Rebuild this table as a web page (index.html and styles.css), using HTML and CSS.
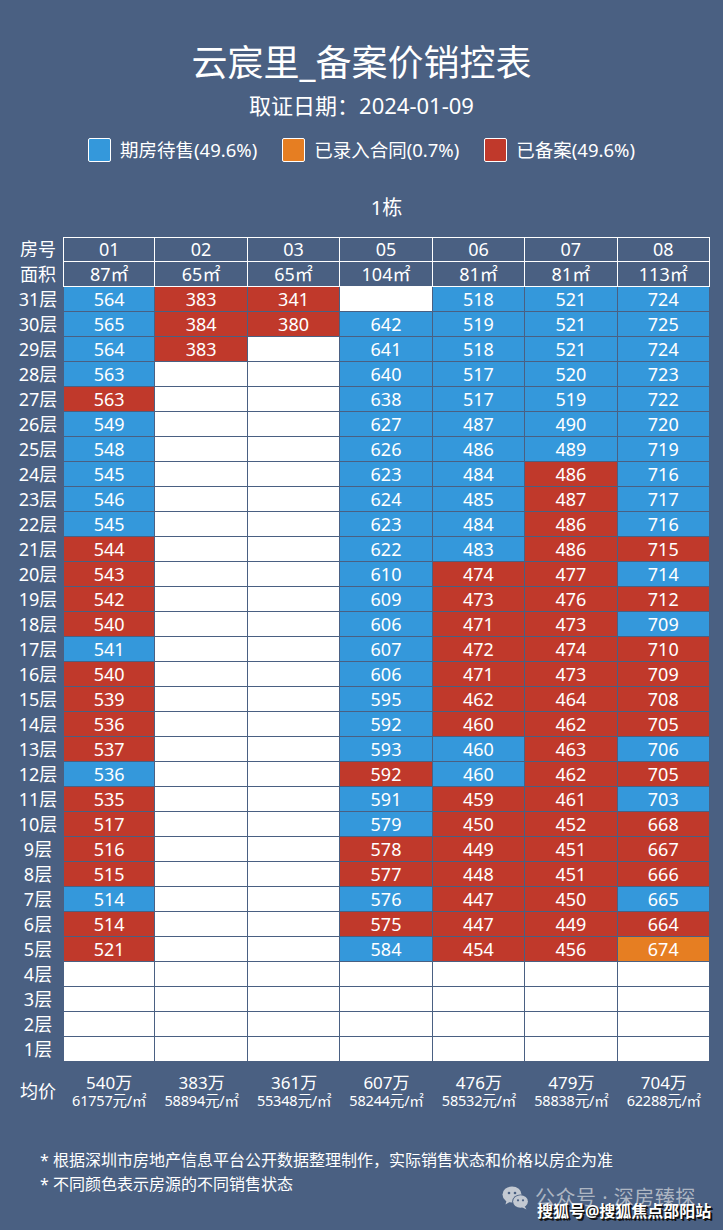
FILE: index.html
```html
<!DOCTYPE html>
<html lang="zh-CN">
<head>
<meta charset="utf-8">
<title>云宸里_备案价销控表</title>
<link rel="stylesheet" href="styles.css">
</head>
<body>
<div class="page">
  <header class="top">
    <h1 class="title">云宸里_备案价销控表</h1>
    <div class="date">取证日期：2024-01-09</div>
    <div class="legend">
      <span class="item"><i class="sw b"></i>期房待售(49.6%)</span>
      <span class="item"><i class="sw o"></i>已录入合同(0.7%)</span>
      <span class="item"><i class="sw r"></i>已备案(49.6%)</span>
    </div>
    <div class="bld">1栋</div>
  </header>

  <div class="sheet">
    <div class="row hr first"><div class="lb">房号</div><div class="h">01</div><div class="h">02</div><div class="h">03</div><div class="h">05</div><div class="h">06</div><div class="h">07</div><div class="h">08</div></div>
    <div class="row hr"><div class="lb">面积</div><div class="h">87㎡</div><div class="h">65㎡</div><div class="h">65㎡</div><div class="h">104㎡</div><div class="h">81㎡</div><div class="h">81㎡</div><div class="h">113㎡</div></div>

    <div class="row"><div class="lb">31层</div><div class="c b">564</div><div class="c r">383</div><div class="c r">341</div><div class="c w"></div><div class="c b">518</div><div class="c b">521</div><div class="c b">724</div></div>
    <div class="row"><div class="lb">30层</div><div class="c b">565</div><div class="c r">384</div><div class="c r">380</div><div class="c b">642</div><div class="c b">519</div><div class="c b">521</div><div class="c b">725</div></div>
    <div class="row"><div class="lb">29层</div><div class="c b">564</div><div class="c r">383</div><div class="c w"></div><div class="c b">641</div><div class="c b">518</div><div class="c b">521</div><div class="c b">724</div></div>
    <div class="row"><div class="lb">28层</div><div class="c b">563</div><div class="c w"></div><div class="c w"></div><div class="c b">640</div><div class="c b">517</div><div class="c b">520</div><div class="c b">723</div></div>
    <div class="row"><div class="lb">27层</div><div class="c r">563</div><div class="c w"></div><div class="c w"></div><div class="c b">638</div><div class="c b">517</div><div class="c b">519</div><div class="c b">722</div></div>
    <div class="row"><div class="lb">26层</div><div class="c b">549</div><div class="c w"></div><div class="c w"></div><div class="c b">627</div><div class="c b">487</div><div class="c b">490</div><div class="c b">720</div></div>
    <div class="row"><div class="lb">25层</div><div class="c b">548</div><div class="c w"></div><div class="c w"></div><div class="c b">626</div><div class="c b">486</div><div class="c b">489</div><div class="c b">719</div></div>
    <div class="row"><div class="lb">24层</div><div class="c b">545</div><div class="c w"></div><div class="c w"></div><div class="c b">623</div><div class="c b">484</div><div class="c r">486</div><div class="c b">716</div></div>
    <div class="row"><div class="lb">23层</div><div class="c b">546</div><div class="c w"></div><div class="c w"></div><div class="c b">624</div><div class="c b">485</div><div class="c r">487</div><div class="c b">717</div></div>
    <div class="row"><div class="lb">22层</div><div class="c b">545</div><div class="c w"></div><div class="c w"></div><div class="c b">623</div><div class="c b">484</div><div class="c r">486</div><div class="c b">716</div></div>
    <div class="row"><div class="lb">21层</div><div class="c r">544</div><div class="c w"></div><div class="c w"></div><div class="c b">622</div><div class="c b">483</div><div class="c r">486</div><div class="c r">715</div></div>
    <div class="row"><div class="lb">20层</div><div class="c r">543</div><div class="c w"></div><div class="c w"></div><div class="c b">610</div><div class="c r">474</div><div class="c r">477</div><div class="c b">714</div></div>
    <div class="row"><div class="lb">19层</div><div class="c r">542</div><div class="c w"></div><div class="c w"></div><div class="c b">609</div><div class="c r">473</div><div class="c r">476</div><div class="c r">712</div></div>
    <div class="row"><div class="lb">18层</div><div class="c r">540</div><div class="c w"></div><div class="c w"></div><div class="c b">606</div><div class="c r">471</div><div class="c r">473</div><div class="c b">709</div></div>
    <div class="row"><div class="lb">17层</div><div class="c b">541</div><div class="c w"></div><div class="c w"></div><div class="c b">607</div><div class="c r">472</div><div class="c r">474</div><div class="c r">710</div></div>
    <div class="row"><div class="lb">16层</div><div class="c r">540</div><div class="c w"></div><div class="c w"></div><div class="c b">606</div><div class="c r">471</div><div class="c r">473</div><div class="c r">709</div></div>
    <div class="row"><div class="lb">15层</div><div class="c r">539</div><div class="c w"></div><div class="c w"></div><div class="c b">595</div><div class="c r">462</div><div class="c r">464</div><div class="c r">708</div></div>
    <div class="row"><div class="lb">14层</div><div class="c r">536</div><div class="c w"></div><div class="c w"></div><div class="c b">592</div><div class="c r">460</div><div class="c r">462</div><div class="c r">705</div></div>
    <div class="row"><div class="lb">13层</div><div class="c r">537</div><div class="c w"></div><div class="c w"></div><div class="c b">593</div><div class="c b">460</div><div class="c r">463</div><div class="c b">706</div></div>
    <div class="row"><div class="lb">12层</div><div class="c b">536</div><div class="c w"></div><div class="c w"></div><div class="c r">592</div><div class="c b">460</div><div class="c r">462</div><div class="c r">705</div></div>
    <div class="row"><div class="lb">11层</div><div class="c r">535</div><div class="c w"></div><div class="c w"></div><div class="c b">591</div><div class="c r">459</div><div class="c r">461</div><div class="c b">703</div></div>
    <div class="row"><div class="lb">10层</div><div class="c r">517</div><div class="c w"></div><div class="c w"></div><div class="c b">579</div><div class="c r">450</div><div class="c r">452</div><div class="c r">668</div></div>
    <div class="row"><div class="lb">9层</div><div class="c r">516</div><div class="c w"></div><div class="c w"></div><div class="c r">578</div><div class="c r">449</div><div class="c r">451</div><div class="c r">667</div></div>
    <div class="row"><div class="lb">8层</div><div class="c r">515</div><div class="c w"></div><div class="c w"></div><div class="c r">577</div><div class="c r">448</div><div class="c r">451</div><div class="c r">666</div></div>
    <div class="row"><div class="lb">7层</div><div class="c b">514</div><div class="c w"></div><div class="c w"></div><div class="c b">576</div><div class="c r">447</div><div class="c r">450</div><div class="c b">665</div></div>
    <div class="row"><div class="lb">6层</div><div class="c r">514</div><div class="c w"></div><div class="c w"></div><div class="c r">575</div><div class="c r">447</div><div class="c r">449</div><div class="c r">664</div></div>
    <div class="row"><div class="lb">5层</div><div class="c r">521</div><div class="c w"></div><div class="c w"></div><div class="c b">584</div><div class="c r">454</div><div class="c r">456</div><div class="c o">674</div></div>
    <div class="row"><div class="lb">4层</div><div class="c w"></div><div class="c w"></div><div class="c w"></div><div class="c w"></div><div class="c w"></div><div class="c w"></div><div class="c w"></div></div>
    <div class="row"><div class="lb">3层</div><div class="c w"></div><div class="c w"></div><div class="c w"></div><div class="c w"></div><div class="c w"></div><div class="c w"></div><div class="c w"></div></div>
    <div class="row"><div class="lb">2层</div><div class="c w"></div><div class="c w"></div><div class="c w"></div><div class="c w"></div><div class="c w"></div><div class="c w"></div><div class="c w"></div></div>
    <div class="row"><div class="lb">1层</div><div class="c w"></div><div class="c w"></div><div class="c w"></div><div class="c w"></div><div class="c w"></div><div class="c w"></div><div class="c w"></div></div>

    <div class="row avg">
      <div class="lb al">均价</div>
      <div class="ac"><span class="tot">540万</span><span class="per">61757元/㎡</span></div>
      <div class="ac"><span class="tot">383万</span><span class="per">58894元/㎡</span></div>
      <div class="ac"><span class="tot">361万</span><span class="per">55348元/㎡</span></div>
      <div class="ac"><span class="tot">607万</span><span class="per">58244元/㎡</span></div>
      <div class="ac"><span class="tot">476万</span><span class="per">58532元/㎡</span></div>
      <div class="ac"><span class="tot">479万</span><span class="per">58838元/㎡</span></div>
      <div class="ac"><span class="tot">704万</span><span class="per">62288元/㎡</span></div>
    </div>
  </div>

  <footer class="notes">
    <p>* 根据深圳市房地产信息平台公开数据整理制作，实际销售状态和价格以房企为准</p>
    <p>* 不同颜色表示房源的不同销售状态</p>
  </footer>

  <div class="wm">
    <svg class="wx" width="27" height="24" viewBox="0 0 27 24">
      <ellipse cx="10" cy="8.5" rx="9.5" ry="8" fill="#c3c9d2"/>
      <path d="M4.5 14.5 L3.5 18.5 L8 15.8 Z" fill="#c3c9d2"/>
      <circle cx="7" cy="7" r="1.3" fill="#4a6082"/>
      <circle cx="13" cy="7" r="1.3" fill="#4a6082"/>
      <ellipse cx="18.5" cy="15.5" rx="8.3" ry="7" fill="#4a6082"/>
      <ellipse cx="18.5" cy="15.5" rx="7.4" ry="6.2" fill="#c3c9d2"/>
      <path d="M22.5 20 L24.5 23.5 L20 21.3 Z" fill="#c3c9d2"/>
      <circle cx="16" cy="14.3" r="1.1" fill="#4a6082"/>
      <circle cx="21" cy="14.3" r="1.1" fill="#4a6082"/>
    </svg>
    <span class="wmt">公众号 · 深房臻探</span>
  </div>
  <div class="sohu">搜狐号@搜狐焦点邵阳站</div>
</div>
</body>
</html>
```

FILE: styles.css
```css
html, body {
  margin: 0;
  padding: 0;
  background: #4a6082;
}

body {
  font-family: "Noto Sans", "Noto Sans CJK SC", sans-serif;
  color: #ffffff;
}

.page {
  position: relative;
  width: 723px;
  height: 1230px;
  overflow: hidden;
  background: #4a6082;
}

.top {
  padding-top: 40px;
  text-align: center;
}

.title {
  margin: 0;
  font-size: 36px;
  line-height: 46px;
  font-weight: 400;
}

.date {
  margin-top: 4px;
  font-size: 22px;
  line-height: 30px;
}

.legend {
  margin-top: 18px;
  display: flex;
  justify-content: center;
  gap: 25px;
  font-size: 18.5px;
  line-height: 24px;
}

.item {
  display: flex;
  align-items: center;
  gap: 9px;
}

.sw {
  display: block;
  width: 23px;
  height: 24px;
  border: 1px solid #ffffff;
  border-radius: 2px;
  box-sizing: border-box;
}

.bld {
  margin: 32px 0 0 63px;
  width: 647px;
  font-size: 20px;
  line-height: 28px;
}

.sheet {
  margin: 15px 0 0 13px;
  width: 697px;
}

.row {
  display: grid;
  grid-template-columns: 50px repeat(7, 1fr);
}

.lb {
  height: 25px;
  line-height: 25px;
  text-align: center;
  font-size: 18px;
}

.h {
  box-sizing: border-box;
  height: 25px;
  border-right: 1px solid #ffffff;
  border-bottom: 1px solid #ffffff;
  text-align: center;
  font-size: 18px;
  line-height: 24px;
}

.first .h {
  border-top: 1px solid #ffffff;
  line-height: 23px;
}

.hr > .h:nth-child(2) {
  border-left: 1px solid #ffffff;
}

.c {
  box-sizing: border-box;
  height: 25px;
  border-right: 1px solid #4a6082;
  border-bottom: 1px solid #4a6082;
  text-align: center;
  font-size: 18px;
  line-height: 24px;
}

.row > .c:nth-child(2) {
  border-left: 1px solid #4a6082;
}

.b { background: #3498db; }
.r { background: #c0392b; }
.o { background: #e67e22; }
.w { background: #ffffff; }

.avg {
  padding-top: 12px;
}

.al {
  height: 35px;
  line-height: 35px;
}

.ac {
  display: flex;
  flex-direction: column;
  align-items: center;
}

.tot {
  font-size: 17px;
  line-height: 18px;
}

.per {
  font-size: 14.5px;
  line-height: 17px;
  letter-spacing: -0.2px;
}

.notes {
  margin-top: 39px;
  padding-left: 40px;
  font-size: 16px;
  line-height: 24px;
}

.notes p {
  margin: 0;
}

.wm {
  position: absolute;
  left: 502px;
  top: 1186px;
  display: flex;
  align-items: center;
  gap: 6px;
}

.wmt {
  font-size: 20px;
  line-height: 24px;
  color: #aeb6c2;
  letter-spacing: 0.5px;
}

.sohu {
  position: absolute;
  left: 537px;
  top: 1200px;
  font-size: 16px;
  line-height: 22px;
  font-weight: 700;
  color: #ffffff;
  text-shadow: 1px 1px 0 #111, 2px 2px 0 #111;
}
```
